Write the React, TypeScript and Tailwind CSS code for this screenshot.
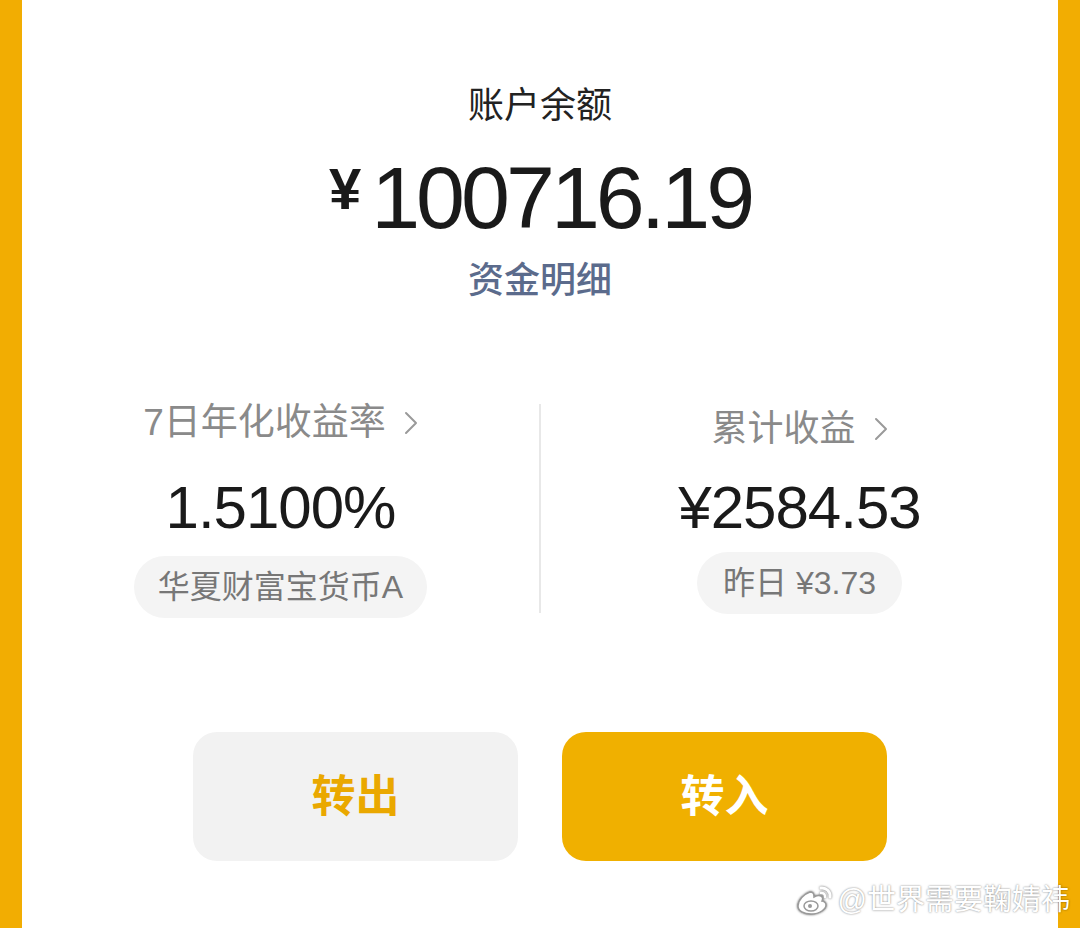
import React from "react";

const cjk = "font-['Liberation_Sans','Noto_Sans_CJK_SC',sans-serif]";

function Chevron() {
  return (
    <svg width="14" height="24" viewBox="0 0 14 24" className="ml-[18px]">
      <polyline
        points="2,2 12,12 2,22"
        fill="none"
        stroke="#9a9a9a"
        strokeWidth="2"
        strokeLinecap="round"
        strokeLinejoin="round"
      />
    </svg>
  );
}

function WeiboLogo() {
  return (
    <svg width="40" height="32" viewBox="0 0 40 32" className="drop-shadow-[0_0_1px_rgba(0,0,0,0.6)]">
      <path
        d="M16 8c-6 2-12 8-12 14 0 5 6 8 13 8 9 0 15-5 15-9 0-3-3-4-4-4 1-2 1-4-1-5-2-1-5 0-7 1 0-2 0-3-1-4-1-1-2-1-3-1z"
        fill="white"
        stroke="#9a9a9a"
        strokeWidth="1.5"
      />
      <ellipse cx="17" cy="22" rx="7" ry="5" fill="white" stroke="#9a9a9a" strokeWidth="1.5" />
      <circle cx="16" cy="22" r="2" fill="#9a9a9a" />
      <path d="M27 4a8 8 0 0 1 9 9" fill="none" stroke="white" strokeWidth="3" strokeLinecap="round" />
      <path d="M27 9a3.5 3.5 0 0 1 4 4" fill="none" stroke="white" strokeWidth="2.5" strokeLinecap="round" />
    </svg>
  );
}

export default function App() {
  return (
    <div className={`relative h-[928px] w-[1080px] border-x-[22px] border-[#f2ad02] bg-white ${cjk}`}>
      <div className="flex flex-col items-center pt-[84px]">
        <div className="text-[36px] leading-[44px] text-[#222]">账户余额</div>
        <div className="mt-[22px] flex items-start text-[#1a1a1a]">
          <span className="mt-[9px] mr-[10px] text-[58px] font-bold leading-[60px]">¥</span>
          <span className="text-[88px] leading-[96px] tracking-[-4px] font-['Liberation_Sans',sans-serif]">
            100716.19
          </span>
        </div>
        <div className="mt-[13px] text-[36px] font-medium leading-[44px] text-[#5b6b8c]">资金明细</div>
      </div>

      <div className="mt-[96px] flex">
        <div className="flex flex-1 flex-col items-center">
          <div className="flex items-center text-[37px] leading-[48px] text-[#8a8a8a]">
            7日年化收益率
            <Chevron />
          </div>
          <div className="mt-[29px] text-[60px] leading-[64px] tracking-[-1px] text-[#1a1a1a]">1.5100%</div>
          <div className="mt-[16px] flex h-[62px] items-center rounded-full bg-[#f4f4f4] px-[24px] text-[32px] text-[#777]">
            华夏财富宝货币A
          </div>
        </div>
        <div className="my-[5px] w-[2px] bg-[#e8e8e8]" />
        <div className="flex flex-1 flex-col items-center">
          <div className="mt-[6px] flex items-center text-[36px] leading-[48px] text-[#8a8a8a]">
            累计收益
            <Chevron />
          </div>
          <div className="mt-[23px] text-[60px] leading-[64px] tracking-[-1px] text-[#1a1a1a]">¥2584.53</div>
          <div className="mt-[12px] flex h-[62px] items-center rounded-full bg-[#f4f4f4] px-[26px] text-[32px] text-[#777]">
            昨日 ¥3.73
          </div>
        </div>
      </div>

      <div className="mt-[114px] flex justify-center gap-[44px]">
        <button className="flex h-[129px] w-[325px] items-center justify-center rounded-[24px] bg-[#f2f2f2] text-[44px] font-bold text-[#eaa800]">
          转出
        </button>
        <button className="flex h-[129px] w-[325px] items-center justify-center rounded-[24px] bg-[#f0b000] text-[44px] font-bold text-white">
          转入
        </button>
      </div>

      <div className="absolute bottom-[10px] right-[-12px] flex items-center gap-[4px]">
        <WeiboLogo />
        <span className="text-[29px] leading-[36px] text-white [text-shadow:0_0_2px_rgba(0,0,0,0.55)]">
          @世界需要鞠婧祎
        </span>
      </div>
    </div>
  );
}
